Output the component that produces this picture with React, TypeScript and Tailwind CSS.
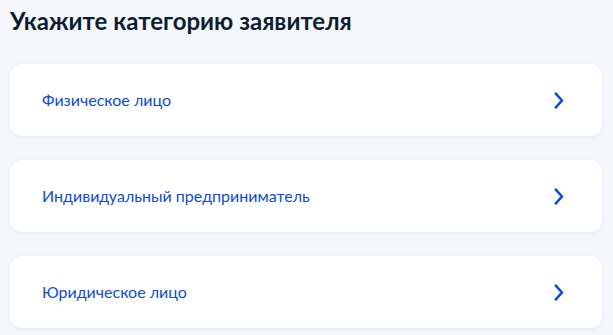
const categories = ['Физическое лицо', 'Индивидуальный предприниматель', 'Юридическое лицо'];

function Chevron() {
  return (
    <svg width="10" height="17" viewBox="0 0 10 17" fill="none" className="shrink-0">
      <path d="M1.8 1.6 L8 8.5 L1.8 15.4" stroke="#0d4cd3" strokeWidth="2.6" strokeLinecap="round" strokeLinejoin="round" />
    </svg>
  );
}

export default function App() {
  return (
    <div className="min-h-[335px] w-full bg-[#f5f7fb] px-[10px] pt-[5px] pb-4 font-['Lato',sans-serif]">
      <h1 className="mb-[27px] text-[24px] font-bold leading-[32px] text-[#0b1f33]">
        Укажите категорию заявителя
      </h1>

      <div className="flex flex-col gap-6 pr-px">
        {categories.map((name) => (
          <button
            key={name}
            className="flex h-[72px] w-full items-center justify-between rounded-xl bg-white pl-8 pr-[38px] text-left shadow-[0_1px_4px_rgba(102,150,200,0.12)]"
          >
            <span className="text-[16px] leading-5 text-[#0d4cd3]">{name}</span>
            <Chevron />
          </button>
        ))}
      </div>
    </div>
  );
}
